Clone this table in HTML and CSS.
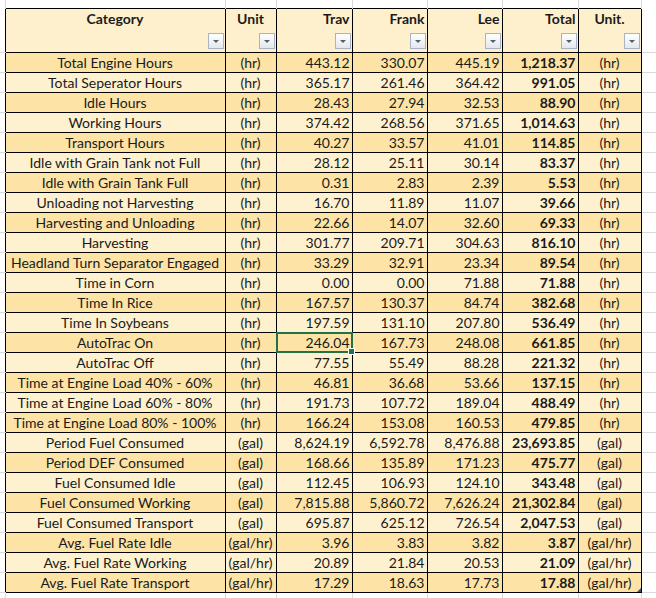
FILE: index.html
```html
<!DOCTYPE html>
<html lang="en">
<head>
  <meta charset="UTF-8" />
  <meta name="viewport" content="width=device-width, initial-scale=1.0"/>
  <title>Harvest Summary</title>
  <link rel="stylesheet" href="styles.css">
</head>
<body>

  <table class="sheet" id="sheet">
    <colgroup>
      <col class="w-gut-l">
      <col class="w-cat">
      <col class="w-unit">
      <col class="w-num">
      <col class="w-num2">
      <col class="w-num2">
      <col class="w-num">
      <col class="w-unit2">
      <col class="w-gut-r">
    </colgroup>
    <!-- empty sheet row above the table -->
    <tr class="gap-top">
      <td class="g"></td><td class="g"></td><td class="g"></td><td class="g"></td><td class="g"></td>
      <td class="g"></td><td class="g"></td><td class="g"></td><td class="g g-end"></td>
    </tr>
    <tr class="head">
      <td class="gl"></td>
      <td class="hd center"><div class="hd-in"><span>Category</span><span class="filter"></span></div></td>
      <td class="hd center"><div class="hd-in"><span>Unit</span><span class="filter"></span></div></td>
      <td class="hd right"><div class="hd-in"><span>Trav</span><span class="filter"></span></div></td>
      <td class="hd right"><div class="hd-in"><span>Frank</span><span class="filter"></span></div></td>
      <td class="hd right"><div class="hd-in"><span>Lee</span><span class="filter"></span></div></td>
      <td class="hd right"><div class="hd-in"><span>Total</span><span class="filter"></span></div></td>
      <td class="hd center"><div class="hd-in"><span>Unit.</span><span class="filter"></span></div></td>
      <td class="gr"></td>
    </tr>
    <tbody id="rows"></tbody>
    <!-- empty sheet row below the table -->
    <tr class="gap-bot">
      <td class="gb"></td><td class="gb"></td><td class="gb"></td><td class="gb"></td><td class="gb"></td>
      <td class="gb"></td><td class="gb"></td><td class="gb"></td><td class="gb"></td>
    </tr>
  </table>

  <script>
    const data = [
      ["Total Engine Hours", "(hr)", "443.12", "330.07", "445.19", "1,218.37"],
      ["Total Seperator Hours", "(hr)", "365.17", "261.46", "364.42", "991.05"],
      ["Idle Hours", "(hr)", "28.43", "27.94", "32.53", "88.90"],
      ["Working Hours", "(hr)", "374.42", "268.56", "371.65", "1,014.63"],
      ["Transport Hours", "(hr)", "40.27", "33.57", "41.01", "114.85"],
      ["Idle with Grain Tank not Full", "(hr)", "28.12", "25.11", "30.14", "83.37"],
      ["Idle with Grain Tank Full", "(hr)", "0.31", "2.83", "2.39", "5.53"],
      ["Unloading not Harvesting", "(hr)", "16.70", "11.89", "11.07", "39.66"],
      ["Harvesting and Unloading", "(hr)", "22.66", "14.07", "32.60", "69.33"],
      ["Harvesting", "(hr)", "301.77", "209.71", "304.63", "816.10"],
      ["Headland Turn Separator Engaged", "(hr)", "33.29", "32.91", "23.34", "89.54"],
      ["Time in Corn", "(hr)", "0.00", "0.00", "71.88", "71.88"],
      ["Time In Rice", "(hr)", "167.57", "130.37", "84.74", "382.68"],
      ["Time In Soybeans", "(hr)", "197.59", "131.10", "207.80", "536.49"],
      ["AutoTrac On", "(hr)", "246.04", "167.73", "248.08", "661.85"],
      ["AutoTrac Off", "(hr)", "77.55", "55.49", "88.28", "221.32"],
      ["Time at Engine Load 40% - 60%", "(hr)", "46.81", "36.68", "53.66", "137.15"],
      ["Time at Engine Load 60% - 80%", "(hr)", "191.73", "107.72", "189.04", "488.49"],
      ["Time at Engine Load 80% - 100%", "(hr)", "166.24", "153.08", "160.53", "479.85"],
      ["Period Fuel Consumed", "(gal)", "8,624.19", "6,592.78", "8,476.88", "23,693.85"],
      ["Period DEF Consumed", "(gal)", "168.66", "135.89", "171.23", "475.77"],
      ["Fuel Consumed Idle", "(gal)", "112.45", "106.93", "124.10", "343.48"],
      ["Fuel Consumed Working", "(gal)", "7,815.88", "5,860.72", "7,626.24", "21,302.84"],
      ["Fuel Consumed Transport", "(gal)", "695.87", "625.12", "726.54", "2,047.53"],
      ["Avg. Fuel Rate Idle", "(gal/hr)", "3.96", "3.83", "3.82", "3.87"],
      ["Avg. Fuel Rate Working", "(gal/hr)", "20.89", "21.84", "20.53", "21.09"],
      ["Avg. Fuel Rate Transport", "(gal/hr)", "17.29", "18.63", "17.73", "17.88"]
    ];

    function loadRows() {
      const tbody = document.getElementById("rows");
      let html = "";
      data.forEach((r, i) => {
        const band = i % 2 === 0 ? "dark" : "light";
        const sel = r[0] === "AutoTrac On" ? " selected" : "";
        const last = i === data.length - 1 ? " corner" : "";
        html += `<tr class="row ${band}">
          <td class="gl"></td>
          <td class="center">${r[0]}</td>
          <td class="center">${r[1]}</td>
          <td class="right${sel}">${r[2]}</td>
          <td class="right">${r[3]}</td>
          <td class="right">${r[4]}</td>
          <td class="right bold">${r[5]}</td>
          <td class="center${last}">${r[1]}</td>
          <td class="gr"></td>
        </tr>`;
      });
      tbody.innerHTML = html;
    }

    loadRows();
  </script>
</body>
</html>
```

FILE: styles.css
```css
* {
  box-sizing: border-box;
}

body {
  margin: 0;
  background: #ffffff;
  font-family: 'Lato', 'Liberation Sans', sans-serif;
  font-size: 14px;
  color: #1a1a1a;
}

/* Sheet layout */
.sheet {
  border-collapse: collapse;
  table-layout: fixed;
  width: 656px;
}

.w-gut-l { width: 5px; }
.w-cat { width: 220px; }
.w-unit { width: 51px; }
.w-num { width: 76px; }
.w-num2 { width: 75px; }
.w-unit2 { width: 63px; }
.w-gut-r { width: 15px; }

.sheet td {
  padding: 0 2px;
  white-space: nowrap;
  overflow: hidden;
  line-height: 19px;
}

/* Excel gridlines around the table */
.gap-top { height: 8px; }
.gap-top td.g {
  border-right: 1px solid #d9d9d9;
}
.gap-top td.g-end { border-right: none; }

.gap-bot { height: 6px; }
.gap-bot td.gb {
  border-right: 1px solid #d9d9d9;
}

td.gl, td.gr {
  border-bottom: 1px solid #d9d9d9;
}

/* Header */
.head { height: 44px; }

.hd {
  background: #fef0cc;
  border: 1px solid #000;
  vertical-align: top;
  font-weight: bold;
}

.hd-in {
  height: 42px;
  display: flex;
  flex-direction: column;
  justify-content: space-between;
}

.hd.center .hd-in { align-items: center; }
.hd.right .hd-in { align-items: flex-end; }

.hd-in span:first-child {
  line-height: 20px;
}

.filter {
  width: 16px;
  height: 16px;
  margin-bottom: 2px;
  margin-right: -1px;
  align-self: flex-end;
  border: 1px solid #a9b3c2;
  background: linear-gradient(#ffffff, #e3e7ee);
  position: relative;
}

.filter::after {
  content: "";
  position: absolute;
  left: 4px;
  top: 6px;
  border-left: 3px solid transparent;
  border-right: 3px solid transparent;
  border-top: 3px solid #555c66;
}

/* Body rows */
.row { height: 20px; }

.row td:not(.gl):not(.gr) {
  border: 1px solid #000;
}

.row.dark td:not(.gl):not(.gr) { background: #fde3a6; }
.row.light td:not(.gl):not(.gr) { background: #fef1cf; }

.center { text-align: center; }
.right { text-align: right; }
.bold { font-weight: bold; }

/* Active cell */
td.selected {
  position: relative;
  overflow: visible;
}

td.selected::before {
  content: "";
  position: absolute;
  left: -1px;
  top: -1px;
  right: -1px;
  bottom: -1px;
  border: 2px solid #217346;
}

td.selected::after {
  content: "";
  position: absolute;
  right: -3px;
  bottom: -3px;
  width: 5px;
  height: 5px;
  background: #217346;
  border: 1px solid #fff;
}

/* Table resize marker */
td.corner {
  position: relative;
  overflow: visible;
}

td.corner::after {
  content: "";
  position: absolute;
  right: 0;
  bottom: 0;
  border-left: 4px solid transparent;
  border-bottom: 4px solid #3d4f7a;
}
```
